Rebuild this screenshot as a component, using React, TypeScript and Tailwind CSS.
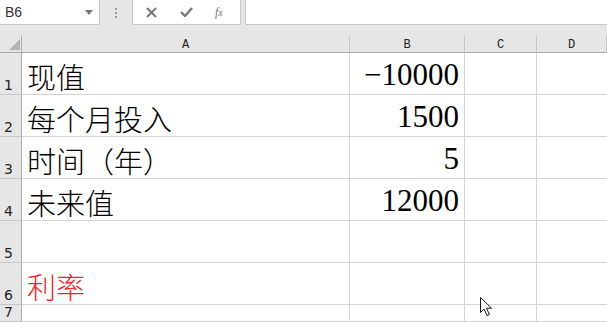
import React from "react";

const rows: { n: number; a?: string; b?: string; red?: boolean }[] = [
  { n: 1, a: "现值", b: "−10000" },
  { n: 2, a: "每个月投入", b: "1500" },
  { n: 3, a: "时间（年）", b: "5" },
  { n: 4, a: "未来值", b: "12000" },
  { n: 5 },
  { n: 6, a: "利率", red: true },
  { n: 7 },
];

const rowH = ["h-[42px]", "h-[42px]", "h-[42px]", "h-[42px]", "h-[42px]", "h-[42px]", "h-[17px]"];

export default function App() {
  return (
    <div className="relative w-[607px] h-[322px] overflow-hidden bg-white" style={{ fontFamily: '"Liberation Sans", sans-serif' }}>
      {/* formula bar */}
      <div className="flex h-[36px] bg-[#e6e6e6]">
        <div className="flex h-[25px] w-[100px] items-center justify-between border-r border-b border-[#c6c6c6] bg-white pl-[5px] pr-[6px]">
          <span className="text-[14px] text-[#333]">B6</span>
          <svg width="8" height="5" viewBox="0 0 8 5"><path d="M0 0h8L4 5z" fill="#777" /></svg>
        </div>
        <div className="flex w-[32px] h-[25px] flex-col items-center justify-center gap-[2px]">
          <span className="block h-[2px] w-[2px] bg-[#999]" />
          <span className="block h-[2px] w-[2px] bg-[#999]" />
          <span className="block h-[2px] w-[2px] bg-[#999]" />
        </div>
        <div className="flex h-[25px] w-[109px] items-center border border-t-0 border-[#c6c6c6] bg-white">
          <svg className="ml-[13px]" width="11" height="11" viewBox="0 0 11 11">
            <path d="M1 1l9 9M10 1l-9 9" stroke="#777" strokeWidth="2" />
          </svg>
          <svg className="ml-[23px]" width="13" height="10" viewBox="0 0 13 10">
            <path d="M1 5l4 4 7-8" stroke="#777" strokeWidth="2.4" fill="none" />
          </svg>
          <span className="ml-[22px] text-[12px] italic text-[#777]" style={{ fontFamily: '"Liberation Serif", serif' }}>
            f<span className="text-[10px]">x</span>
          </span>
        </div>
        <div className="ml-[4px] h-[25px] flex-1 border-l border-b border-[#c6c6c6] bg-white" />
      </div>

      {/* sheet */}
      <div className="grid grid-cols-[22px_328px_115px_72px_1fr]">
        <div className="relative h-[17px] border-r border-b border-[#ababab] bg-[#e6e6e6]">
          <svg className="absolute left-[9px] top-[3px]" width="11" height="11" viewBox="0 0 11 11">
            <path d="M11 0v11H0z" fill="#b4b4b4" />
          </svg>
        </div>
        {["A", "B", "C", "D"].map((c) => (
          <div
            key={c}
            className="flex h-[17px] items-end justify-center border-r border-b border-r-[#c6c6c6] border-b-[#ababab] bg-[#e6e6e6] pb-[1px] text-[12px] leading-none text-[#222]"
            style={{ fontFamily: '"Liberation Mono", monospace' }}
          >
            {c}
          </div>
        ))}

        {rows.map((r, i) => (
          <React.Fragment key={r.n}>
            <div
              className={`flex ${rowH[i]} items-end border-r border-b border-r-[#ababab] border-b-[#c6c6c6] bg-[#e6e6e6] pl-[4px] text-[14px] leading-[17px] text-[#222]`}
              style={{ fontFamily: '"DejaVu Sans", sans-serif' }}
            >
              {r.n}
            </div>
            <div
              className={`flex ${rowH[i]} items-end border-r border-b border-[#d4d4d4] pl-[5px] pb-[3px] text-[29px] leading-none ${r.red ? "text-[#ff2020]" : "text-black"}`}
              style={{ fontFamily: '"Noto Sans CJK SC", sans-serif', fontWeight: 300 }}
            >
              {r.a}
            </div>
            <div
              className={`flex ${rowH[i]} items-end justify-end border-r border-b border-[#d4d4d4] pr-[5px] pb-[4px] text-[31px] leading-none text-black`}
              style={{ fontFamily: '"Liberation Serif", serif' }}
            >
              {r.b}
            </div>
            <div className={`${rowH[i]} border-r border-b border-[#d4d4d4]`} />
            <div className={`${rowH[i]} border-b border-[#d4d4d4]`} />
          </React.Fragment>
        ))}
      </div>

      {/* mouse pointer */}
      <svg className="absolute left-[480px] top-[297px]" width="13" height="20" viewBox="0 0 13 20">
        <path d="M0.5 0.5v15l3.5-3.5 3 6.5 2.5-1-3-6.3h5z" fill="#fff" stroke="#1a1030" strokeWidth="1" strokeLinejoin="round" />
      </svg>
    </div>
  );
}
